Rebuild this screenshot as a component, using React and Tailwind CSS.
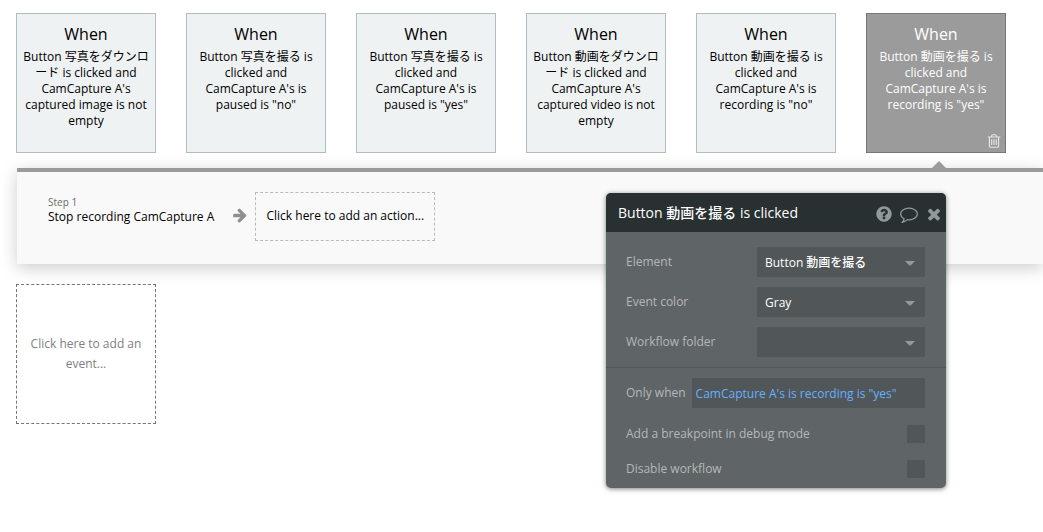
import React from "react";

const paths = {
  question:
    "M1024 1376v-192q0-14-9-23t-23-9h-192q-14 0-23 9t-9 23v192q0 14 9 23t23 9h192q14 0 23-9t9-23zm256-672q0-88-55.5-163t-138.5-116-170-41q-243 0-371 213-15 24 8 42l132 100q7 6 19 6 16 0 25-12 53-68 86-92 34-24 86-24 48 0 85.5 26t37.5 59q0 38-20 61t-68 45q-63 28-115.5 86.5t-52.5 125.5v36q0 14 9 23t23 9h192q14 0 23-9t9-23q0-19 21.5-49.5t54.5-49.5q32-18 49-28.5t46-35 44.5-48 28-60.5 12.5-81zm384 192q0 209-103 385.5t-279.5 279.5-385.5 103-385.5-103-279.5-279.5-103-385.5 103-385.5 279.5-279.5 385.5-103 385.5 103 279.5 279.5 103 385.5z",
  comment:
    "M896 384q-204 0-381.5 69.5t-282 187.5-104.5 255q0 112 71.5 213.5t201.5 175.5l87 50-27 96q-24 91-70 172 152-63 275-171l43-38 57 6q69 8 130 8 204 0 381.5-69.5t282-187.5 104.5-255-104.5-255-282-187.5-381.5-69.5zm896 512q0 174-120 321.5t-326 233-450 85.5q-70 0-145-8-198 175-460 242-49 14-114 22h-5q-15 0-27-10.5t-16-27.5v-1q-3-4-.5-12t2-10 4.5-9.5l6-9 7-8.5 8-9q7-8 31-34.5t34.5-38 31-39.5 32.5-51 27-59 26-76q-157-89-247.5-220t-90.5-281q0-174 120-321.5t326-233 450-85.5 450 85.5 326 233 120 321.5z",
  close:
    "M1490 1322q0 40-28 68l-136 136q-28 28-68 28t-68-28l-294-294-294 294q-28 28-68 28t-68-28l-136-136q-28-28-28-68t28-68l294-294-294-294q-28-28-28-68t28-68l136-136q28-28 68-28t68 28l294 294 294-294q28-28 68-28t68 28l136 136q28 28 28 68t-28 68l-294 294 294 294q28 28 28 68z",
  arrow:
    "M1600 960q0 54-37 91l-651 651q-39 37-91 37-51 0-90-37l-75-75q-38-38-38-91t38-91l293-293h-704q-52 0-84.5-37.5t-32.5-90.5v-128q0-53 32.5-90.5t84.5-37.5h704l-293-294q-38-36-38-90t38-90l75-75q38-38 90-38 53 0 91 38l651 651q37 35 37 90z",
  trash:
    "M704 736v576q0 14-9 23t-23 9h-64q-14 0-23-9t-9-23v-576q0-14 9-23t23-9h64q14 0 23 9t9 23zm256 0v576q0 14-9 23t-23 9h-64q-14 0-23-9t-9-23v-576q0-14 9-23t23-9h64q14 0 23 9t9 23zm256 0v576q0 14-9 23t-23 9h-64q-14 0-23-9t-9-23v-576q0-14 9-23t23-9h64q14 0 23 9t9 23zm128 724v-948h-896v948q0 22 7 40.5t14.5 27 10.5 8.5h832q3 0 10.5-8.5t14.5-27 7-40.5zm-672-1076h448l-48-117q-7-9-17-11h-317q-10 2-17 11zm928 32v64q0 14-9 23t-23 9h-96v948q0 83-47 143.5t-113 60.5h-832q-66 0-113-58.5t-47-141.5v-952h-96q-14 0-23-9t-9-23v-64q0-14 9-23t23-9h309l70-167q15-37 54-63t79-26h320q40 0 79 26t54 63l70 167h309q14 0 23 9t9 23z",
};

function Icon({ name, className }) {
  return (
    <svg viewBox="0 0 1792 1792" fill="currentColor" aria-hidden="true" className={className}>
      <path d={paths[name]} />
    </svg>
  );
}

const events = [
  { text: 'Button 写真をダウンロード is clicked and CamCapture A\'s captured image is not empty' },
  { text: 'Button 写真を撮る is clicked and CamCapture A\'s is paused is "no"' },
  { text: 'Button 写真を撮る is clicked and CamCapture A\'s is paused is "yes"' },
  { text: 'Button 動画をダウンロード is clicked and CamCapture A\'s captured video is not empty' },
  { text: 'Button 動画を撮る is clicked and CamCapture A\'s is recording is "no"' },
  { text: 'Button 動画を撮る is clicked and CamCapture A\'s is recording is "yes"', active: true },
];

function EventCard({ event }) {
  const tone = event.active
    ? "border-[#757575] bg-[#9b9b9b] text-white"
    : "border-[#b0bec1] bg-[#eff2f2] text-black";
  return (
    <div className="relative size-[140px] shrink-0">
      <button type="button" className={`flex size-full flex-col items-center border px-1.5 pt-2 text-center ${tone}`}>
        <span className="text-base leading-6">When</span>
        <span lang="ja" className="pt-[3px] text-xs leading-4 [line-break:loose]">
          {event.text}
        </span>
      </button>
      {event.active && (
        <>
          <button type="button" aria-label="Delete event" className="absolute right-1 bottom-1 text-[#e6e6e6]">
            <Icon name="trash" className="size-4" />
          </button>
          <svg viewBox="0 0 14 7" aria-hidden="true" className="absolute -bottom-[15px] left-[66px] h-[7px] w-3.5 text-[#9b9b9b]">
            <path d="M7 0L14 7H0z" fill="currentColor" />
          </svg>
        </>
      )}
    </div>
  );
}

function SelectRow({ id, label, value }) {
  return (
    <div className="flex items-center justify-between">
      <label htmlFor={id}>{label}</label>
      <div className="relative w-[168px]">
        <select
          id={id}
          defaultValue={value}
          className="h-[30px] w-full appearance-none bg-[#515659] pt-0.5 pr-7 pl-2 text-xs font-medium text-white outline-none"
        >
          <option>{value}</option>
        </select>
        <svg viewBox="0 0 10 5" aria-hidden="true" className="pointer-events-none absolute top-3.5 right-2.5 h-[5px] w-2.5 text-[#969b9e]">
          <path d="M0 0H10L5 5z" fill="currentColor" />
        </svg>
      </div>
    </div>
  );
}

function CheckRow({ id, label }) {
  return (
    <div className="flex items-center justify-between">
      <label htmlFor={id}>{label}</label>
      <input id={id} type="checkbox" className="size-[18px] appearance-none bg-[#515659] checked:bg-[#8b9296]" />
    </div>
  );
}

function PropertyEditor() {
  return (
    <section
      aria-label="Event properties"
      className="absolute top-[193px] left-[606px] w-[340px] overflow-hidden rounded-[5px] bg-[#5f6467] text-xs leading-4 text-[#b4b8ba] shadow-[0_1px_5px_rgba(0,0,0,0.5)]"
    >
      <header className="flex h-[39px] items-center bg-[#293031] pr-[3px] pl-3">
        <h2 className="flex-1 text-sm font-medium text-white">Button 動画を撮る is clicked</h2>
        <div className="flex items-center gap-[7px] pt-0.5 text-[#8f9a9d]">
          <button type="button" aria-label="Help">
            <Icon name="question" className="size-[18px]" />
          </button>
          <button type="button" aria-label="Comment">
            <Icon name="comment" className="size-[18px]" />
          </button>
          <button type="button" aria-label="Close">
            <Icon name="close" className="size-[18px]" />
          </button>
        </div>
      </header>
      <div className="flex flex-col gap-2.5 py-[15px] pr-[21px] pl-5">
        <SelectRow id="element" label="Element" value="Button 動画を撮る" />
        <SelectRow id="color" label="Event color" value="Gray" />
        <SelectRow id="folder" label="Workflow folder" value="" />
      </div>
      <div className="mt-[-5px] flex flex-col gap-[17px] border-t border-[#54595c] pt-2.5 pr-[21px] pb-2.5 pl-5">
        <div className="flex items-center gap-1.5">
          <label htmlFor="condition">Only when</label>
          <input
            id="condition"
            type="text"
            defaultValue={'CamCapture A\'s is recording is "yes"'}
            className="h-[30px] min-w-0 flex-1 bg-[#515659] px-1 text-xs text-[#64b1ff] outline-none"
          />
        </div>
        <CheckRow id="breakpoint" label="Add a breakpoint in debug mode" />
        <CheckRow id="disable" label="Disable workflow" />
      </div>
    </section>
  );
}

export default function App() {
  return (
    <main className="relative min-h-screen overflow-x-hidden pt-[13px] pb-6 pl-4 font-['Open_Sans','Noto_Sans_CJK_JP',sans-serif]">
      <div className="relative z-10 flex gap-[30px]">
        {events.map((event, i) => (
          <EventCard key={i} event={event} />
        ))}
      </div>
      <section
        aria-label="Actions"
        className="mt-[15px] ml-px flex h-24 items-start border-t-4 border-[#9b9b9b] bg-[#f9f9f9] pt-5 pl-[31px] shadow-[0_4px_16px_rgba(0,0,0,0.2)]"
      >
        <button type="button" className="flex flex-col items-start pt-1 text-left">
          <span className="text-[10px] leading-[13px] text-[#6b6b6b]">Step 1</span>
          <span className="text-xs leading-4 text-black">Stop recording CamCapture A</span>
        </button>
        <Icon name="arrow" className="mr-[7px] ml-[18px] mt-[15px] size-4 text-[#8f8f8f]" />
        <button type="button" className="h-[49px] w-[180px] border border-dashed border-[#b0bec1] pb-0.5 text-xs text-black">
          Click here to add an action...
        </button>
      </section>
      <button
        type="button"
        className="mt-5 size-[140px] border border-dashed border-[#757575] px-3 text-xs leading-5 text-[#808080]"
      >
        Click here to add an event...
      </button>
      <PropertyEditor />
    </main>
  );
}
